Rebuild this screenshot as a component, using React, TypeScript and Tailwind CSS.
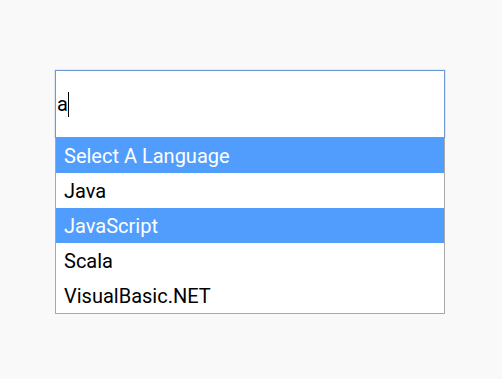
const options = [
  { label: "Select A Language", selected: true },
  { label: "Java", selected: false },
  { label: "JavaScript", selected: true },
  { label: "Scala", selected: false },
  { label: "VisualBasic.NET", selected: false },
];

export default function App() {
  return (
    <div className="w-[502px] h-[379px] bg-[#f9f9f9] pt-[70px] pl-[55px] font-['Roboto',sans-serif]">
      <div className="w-[390px]">
        <div className="h-[68px] bg-white border border-[#6d9ad6] shadow-[0_0_1px_#6d9ad6] flex items-center px-px">
          <span className="text-[20px] text-black leading-none">a</span>
          <span className="w-px h-[25px] bg-black"></span>
        </div>
        <div className="bg-white border border-t-0 border-[#a9a9a9]">
          {options.map((o) => (
            <div
              key={o.label}
              className={
                o.selected
                  ? "h-[35px] flex items-center pl-[8px] text-[20px] text-white bg-[#519dfd]"
                  : "h-[35px] flex items-center pl-[8px] text-[20px] text-black"
              }
            >
              {o.label}
            </div>
          ))}
        </div>
      </div>
    </div>
  );
}
